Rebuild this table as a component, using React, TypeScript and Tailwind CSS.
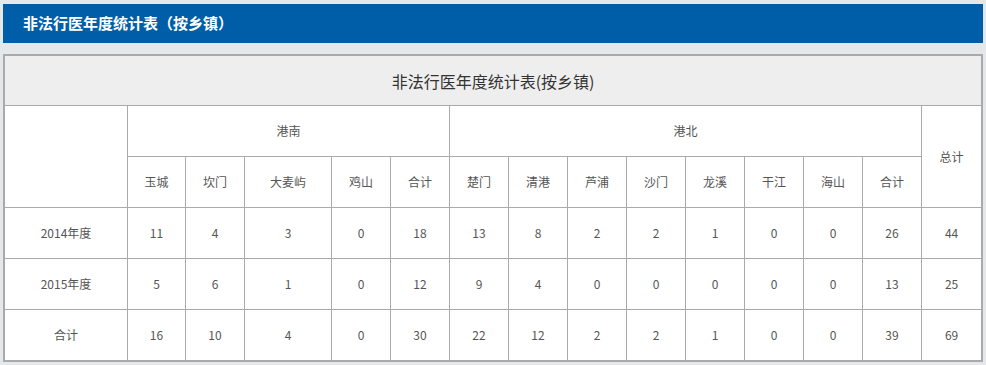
const nanTowns = ["玉城", "坎门", "大麦屿", "鸡山", "合计"];
const beiTowns = ["楚门", "清港", "芦浦", "沙门", "龙溪", "干江", "海山", "合计"];

const rows: { label: string; values: number[] }[] = [
  { label: "2014年度", values: [11, 4, 3, 0, 18, 13, 8, 2, 2, 1, 0, 0, 26, 44] },
  { label: "2015年度", values: [5, 6, 1, 0, 12, 9, 4, 0, 0, 0, 0, 0, 13, 25] },
  { label: "合计", values: [16, 10, 4, 0, 30, 22, 12, 2, 2, 1, 0, 0, 39, 69] },
];

const colWidths = [123, 58, 59, 87, 59, 59, 59, 59, 59, 59, 59, 59, 59, 59, 60];

const cell = "border border-[#aaaaaa] text-center align-middle";

export default function App() {
  return (
    <div
      className="min-h-[365px] bg-[#e5e8eb] px-[3px] pt-[4px]"
      style={{ fontFamily: '"Noto Sans CJK SC", "Noto Sans", sans-serif' }}
    >
      {/* Page header */}
      <div className="flex h-[39px] w-[980px] items-center bg-[#005ea8] pl-[20px]">
        <h1 className="text-[15px] font-bold text-white">非法行医年度统计表（按乡镇）</h1>
      </div>

      {/* Statistics table */}
      <div className="mt-[11px] w-[980px] border border-[#aaaaaa] bg-white">
        <table className="w-full table-fixed border-collapse text-[12px] text-[#555555]">
          <colgroup>
            {colWidths.map((w, i) => (
              <col key={i} style={{ width: w }} />
            ))}
          </colgroup>
          <thead>
            <tr className="h-[50px] bg-[#eeeeee]">
              <th colSpan={15} className={`${cell} text-[16px] font-normal text-[#333333]`}>
                非法行医年度统计表(按乡镇)
              </th>
            </tr>
            <tr className="h-[51px]">
              <th rowSpan={2} className={`${cell} font-normal`} />
              <th colSpan={5} className={`${cell} font-normal`}>
                港南
              </th>
              <th colSpan={8} className={`${cell} font-normal`}>
                港北
              </th>
              <th rowSpan={2} className={`${cell} font-normal`}>
                总计
              </th>
            </tr>
            <tr className="h-[51px]">
              {[...nanTowns, ...beiTowns].map((t, i) => (
                <th key={i} className={`${cell} font-normal`}>
                  {t}
                </th>
              ))}
            </tr>
          </thead>
          <tbody>
            {rows.map((r) => (
              <tr key={r.label} className="h-[51px]">
                <td className={cell}>{r.label}</td>
                {r.values.map((v, i) => (
                  <td key={i} className={cell}>
                    {v}
                  </td>
                ))}
              </tr>
            ))}
          </tbody>
        </table>
      </div>
    </div>
  );
}
